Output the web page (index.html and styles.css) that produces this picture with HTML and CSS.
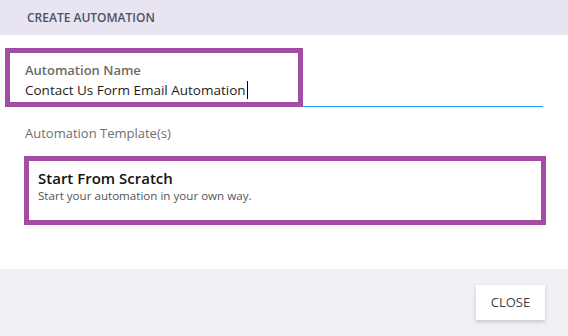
FILE: index.html
```html
<!DOCTYPE html>
<html lang="en">
<head>
<meta charset="UTF-8">
<meta name="viewport" content="width=device-width, initial-scale=1.0">
<title>Create Automation</title>
<link rel="stylesheet" href="styles.css">
</head>
<body>

<div class="dialogo">
  <div class="cabecera">CREATE AUTOMATION</div>

  <div class="contenido">
    <div class="campo">
      <div class="etiqueta">Automation Name</div>
      <div class="valor"><span class="texto">Contact Us Form Email Automation</span></div>
    </div>

    <div class="subtitulo">Automation Template(s)</div>

    <div class="plantilla">
      <div class="plantilla-titulo">Start From Scratch</div>
      <div class="plantilla-desc">Start your automation in your own way.</div>
    </div>
  </div>

  <div class="pie">
    <a href="#" class="boton">CLOSE</a>
  </div>

  <!-- recuadro de resaltado sobre el campo -->
  <div class="resaltado"></div>
</div>

</body>
</html>
```

FILE: styles.css
```css
body {
  margin: 0;
  padding: 0;
  background: #fff;
  font-family: "Open Sans", Arial, sans-serif;
}

.dialogo {
  position: relative;
  width: 568px;
  height: 336px;
  display: flex;
  flex-direction: column;
  background: #fff;
}

.cabecera {
  height: 35px;
  line-height: 35px;
  padding-left: 27px;
  background-color: #e8e4f2;
  color: #4c5261;
  font-size: 12px;
  font-weight: 600;
}

.contenido {
  flex: 1;
  padding: 26px 25px 0 24px;
}

.campo {
  border-bottom: 1px solid #2196f3;
  padding-left: 1px;
  padding-bottom: 5px;
}

.etiqueta {
  font-size: 13px;
  line-height: 18px;
  font-weight: 600;
  color: #6b6b6b;
}

.valor {
  font-size: 13.5px;
  line-height: 22px;
  color: #1d1d1d;
}

.texto {
  border-right: 1px solid #000;
  padding-right: 1px;
}

.subtitulo {
  margin-top: 17px;
  padding-left: 1px;
  font-size: 13px;
  line-height: 18px;
  color: #6f6f6f;
}

.plantilla {
  box-sizing: border-box;
  width: 522px;
  height: 69px;
  margin-top: 14px;
  border: 5px solid #a34ca3;
  padding: 7px 9px 0;
}

.plantilla-titulo {
  font-size: 15px;
  line-height: 20px;
  font-weight: 600;
  color: #111;
}

.plantilla-desc {
  font-size: 11.6px;
  line-height: 16px;
  color: #555;
}

.pie {
  height: 67px;
  background-color: #f0f1f5;
  display: flex;
  justify-content: flex-end;
  align-items: center;
  padding-right: 23px;
}

.boton {
  width: 69px;
  height: 35px;
  line-height: 35px;
  text-align: center;
  background: #fff;
  color: #3a3f4a;
  font-size: 13px;
  text-decoration: none;
  box-shadow: 0 2px 4px rgba(0, 0, 0, 0.18);
}

.resaltado {
  position: absolute;
  box-sizing: border-box;
  left: 5px;
  top: 48px;
  width: 298px;
  height: 59px;
  border: 5px solid #a34ca3;
}
```
